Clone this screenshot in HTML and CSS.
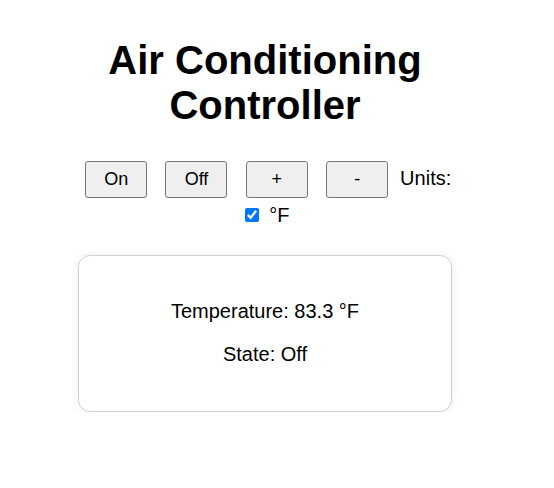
FILE: index.html
```html
<!DOCTYPE html>
<html lang="en">
<head>
<meta charset="utf-8">
<title>Air Conditioning Controller</title>
<link rel="stylesheet" href="styles.css">
</head>
<body>
<div class="app">
  <h1 class="title">Air Conditioning Controller</h1>
  <div class="controls">
    <button class="btn">On</button>
    <button class="btn">Off</button>
    <button class="btn">+</button>
    <button class="btn">-</button>
    Units:
    <input class="unit-check" type="checkbox" checked>
    °F
  </div>
  <div class="card">
    <p class="reading">Temperature: 83.3 °F</p>
    <p class="reading">State: Off</p>
  </div>
</div>
</body>
</html>
```

FILE: styles.css
```css
html, body {
  background: #ffffff;
}
body {
  margin: 8px;
  font-family: "Liberation Sans", Arial, sans-serif;
  font-size: 20px;
  color: #000;
}
.app {
  width: 374px;
  margin-left: 70px;
  text-align: center;
}
.title {
  font-size: 40px;
  font-weight: bold;
  margin: 30px 0 26.6px;
}
.controls {
  text-align: center;
}
.btn {
  font-family: "Liberation Sans", Arial, sans-serif;
  font-size: 18px;
  width: 62px;
  padding: 7px 0;
  margin: 6.4px;
  background: #efefef;
  border: 1px solid #767676;
  border-radius: 3px;
  color: #000;
}
.unit-check {
  width: 14px;
  height: 14px;
  margin: 3px 5px 2px 4px;
}
.card {
  margin-top: 27.4px;
  padding: 24.5px 24px;
  border: 1px solid #d0d0d0;
  border-radius: 12px;
  box-shadow: 0 0 8px rgba(0, 0, 0, 0.08);
}
.reading {
  margin: 20px 0;
}
```
